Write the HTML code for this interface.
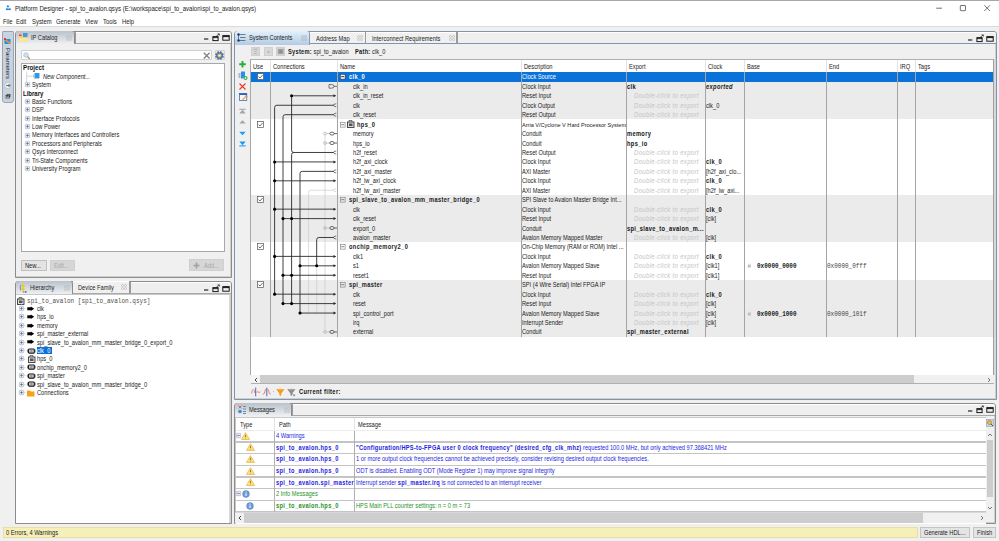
<!DOCTYPE html><html><head><meta charset="utf-8"><style>
*{margin:0;padding:0;box-sizing:border-box}
html,body{width:999px;height:541px;overflow:hidden;background:#f0f0f0;font-family:"Liberation Sans",sans-serif;color:#1a1a1a}
div{position:absolute}
.t{white-space:nowrap;font-size:6.27px;line-height:10px;height:10px;transform:scaleX(0.909);transform-origin:0 50%}
.b{font-weight:bold}
b{letter-spacing:0.39px}
.m{font-family:"Liberation Mono",monospace}
svg{position:absolute;overflow:visible}
</style></head><body>
<div class="" style="left:0px;top:0px;width:999px;height:14px;background:#fff;border-top:1px solid #a8a8a8"></div>
<svg style="left:5px;top:4px" width="8" height="8"><circle cx="2.9" cy="2.3" r="1.1" fill="#1f7ee0"/><circle cx="1.9" cy="5.3" r="1.05" fill="#1f7ee0"/><circle cx="4.8" cy="5.3" r="1.05" fill="#1f7ee0"/><path d="M1.9 5.3H4.8" stroke="#1f7ee0" stroke-width="1.2"/><path d="M2.9 3.2V4.6" stroke="#9cc4f0" stroke-width="0.6"/></svg>
<div class="t" style="left:15px;top:3.6px;font-size:7.3px;transform:scaleX(0.835);color:#1a1a1a">Platform Designer - spi_to_avalon.qsys (E:\workspace\spi_to_avalon\spi_to_avalon.qsys)</div>
<svg style="left:935px;top:3px" width="60" height="10"><path d="M1.2 5.2H7" stroke="#444" stroke-width="0.75"/><rect x="25.3" y="2.5" width="5.2" height="5.2" rx="0.5" fill="none" stroke="#444" stroke-width="0.75"/><path d="M49.3 2.3L55 8M55 2.3L49.3 8" stroke="#444" stroke-width="0.75"/></svg>
<div class="" style="left:0px;top:14px;width:999px;height:13px;background:#fff;border-bottom:1px solid #dadada"></div>
<div class="t" style="left:2.5px;top:17.0px;font-size:6.49px;color:#222">File</div>
<div class="t" style="left:16px;top:17.0px;font-size:6.49px;color:#222">Edit</div>
<div class="t" style="left:31.5px;top:17.0px;font-size:6.49px;color:#222">System</div>
<div class="t" style="left:56px;top:17.0px;font-size:6.49px;color:#222">Generate</div>
<div class="t" style="left:85px;top:17.0px;font-size:6.49px;color:#222">View</div>
<div class="t" style="left:103px;top:17.0px;font-size:6.49px;color:#222">Tools</div>
<div class="t" style="left:122px;top:17.0px;font-size:6.49px;color:#222">Help</div>
<div class="" style="left:1.5px;top:30.8px;width:12.5px;height:72.7px;background:#c9d3df;border:1px solid #98a5b6;border-radius:1px 1px 3px 3px"></div>
<svg style="left:4px;top:38px" width="8" height="7"><rect x="0.5" y="1" width="6" height="5" fill="#2b8fe0"/><path d="M0.5 1L6.5 6" stroke="#f0a020" stroke-width="1.3"/><rect x="0" y="0" width="2" height="2" fill="#e03a2a"/></svg>
<div style="left:2.5px;top:48px;width:10px;height:30px;font-size:6px;line-height:10px;writing-mode:vertical-rl;color:#222;white-space:nowrap">Parameters</div>
<svg style="left:4px;top:81.5px" width="8" height="7"><ellipse cx="3.8" cy="3.5" rx="3.3" ry="3" fill="#eef1f5" stroke="#9aa4b2" stroke-width="0.5"/><path d="M2 3.5H6M4.5 2L6 3.5L4.5 5" stroke="#333" stroke-width="0.7" fill="none"/></svg>
<svg style="left:4px;top:92.5px" width="8" height="7"><ellipse cx="3.8" cy="3.5" rx="3.3" ry="3" fill="#eef1f5" stroke="#9aa4b2" stroke-width="0.5"/><rect x="2" y="2.5" width="3.5" height="2.5" fill="none" stroke="#222" stroke-width="0.7"/><rect x="3" y="1.6" width="3" height="2.2" fill="none" stroke="#222" stroke-width="0.6"/></svg>
<div class="" style="left:14.5px;top:30.5px;width:217px;height:247px;border:1px solid #8c8c8c;border-radius:3px 3px 0 0;background:#f0f0f0;box-shadow:inset -1px -1px 0 #cfcfcf"></div>
<div class="" style="left:15.5px;top:31px;width:59px;height:13px;background:linear-gradient(#b9c1cb,#eef0f2);border-right:1px solid #8a8a8a;border-radius:3px 3px 0 0"></div>
<svg style="left:19px;top:33px" width="9" height="9"><rect x="4" y="0" width="4.5" height="4" fill="#3b9be8"/><rect x="0" y="1.5" width="2.5" height="3" fill="#e8402a"/><path d="M0 3H3.5L4.5 4H8.5V8.5H0Z" fill="#f8d060"/><path d="M0 5H8.5V8.5H0Z" fill="#fbe6a0"/></svg>
<div class="t" style="left:30.5px;top:33.2px;color:#222">IP Catalog</div>
<svg style="left:66px;top:34.8px" width="6" height="6"><g fill="none" stroke="#b8b8b8" stroke-width="0.7"><circle cx="1.5" cy="1.5" r="1"/><circle cx="4.5" cy="1.5" r="1"/><circle cx="1.5" cy="4.5" r="1"/><circle cx="4.5" cy="4.5" r="1"/></g></svg>
<div class="" style="left:74.5px;top:31.5px;width:156px;height:12px;background:#efefef;border-left:1px solid #9a9a9a;border-bottom:1px solid #a8a8a8;box-shadow:inset 0 1px 0 #fff;border-radius:0 3px 0 0"></div>
<svg style="left:203.5px;top:33px" width="28" height="9"><path d="M0 6H4.3" stroke="#111" stroke-width="1.1"/><rect x="8.9" y="3.6" width="5.2" height="4" fill="none" stroke="#111" stroke-width="0.95"/><path d="M8.9 4.6H14" stroke="#111" stroke-width="0.9"/><path d="M12.3 3.2L15.2 1.1M13.6 0.9H15.4V2.5" stroke="#111" stroke-width="0.65" fill="none"/><rect x="18.8" y="2.6" width="6.4" height="4.6" fill="none" stroke="#111" stroke-width="0.95"/><path d="M18.8 3.6H25.2" stroke="#111" stroke-width="1"/></svg>
<div class="" style="left:21px;top:50.3px;width:190.5px;height:10px;background:#fff;border:1px solid #cfcfcf;border-radius:1px"></div>
<svg style="left:22.5px;top:51.5px" width="8" height="8"><circle cx="3" cy="3" r="2.3" fill="#cfe3f7" stroke="#8fb4d8" stroke-width="0.6"/><path d="M4.6 4.6L6.8 6.8" stroke="#b07a3a" stroke-width="1.1"/></svg>
<svg style="left:203px;top:52px" width="8" height="8"><path d="M0.8 0.8L6.6 6.6M6.6 0.8L0.8 6.6" stroke="#858585" stroke-width="1.4"/></svg>
<div class="" style="left:214.5px;top:50.2px;width:10.3px;height:10.3px;background:#e6e8ea;border:1px solid #cfd2d6;border-radius:1px"></div>
<svg style="left:215px;top:50.5px" width="9" height="9"><path d="M7.79 4.81L8.82 5.34L8.15 6.96L7.04 6.61L6.61 7.04L6.96 8.15L5.34 8.82L4.81 7.79L4.19 7.79L3.66 8.82L2.04 8.15L2.39 7.04L1.96 6.61L0.85 6.96L0.18 5.34L1.21 4.81L1.21 4.19L0.18 3.66L0.85 2.04L1.96 2.39L2.39 1.96L2.04 0.85L3.66 0.18L4.19 1.21L4.81 1.21L5.34 0.18L6.96 0.85L6.61 1.96L7.04 2.39L8.15 2.04L8.82 3.66L7.79 4.19Z" fill="#4b72a8"/><circle cx="4.5" cy="4.5" r="2.1" fill="#f2b040"/><circle cx="4.5" cy="4.5" r="1.1" fill="#dff0ff"/></svg>
<div class="" style="left:21px;top:62.8px;width:204px;height:189px;background:#fff;border:1px solid #a8a8a8"></div>
<div class="t" style="left:22.6px;top:63.0px;font-weight:bold;font-size:6.82px;letter-spacing:0;color:#111">Project</div>
<svg style="left:24px;top:70px" width="20" height="14"><path d="M2.7 1.5V12M2.7 6.2H9" stroke="#c4c4c4" stroke-width="0.7" fill="none"/><rect x="10.5" y="3" width="5" height="5" rx="0.6" fill="#2f9be8"/><path d="M10 8.5H15" stroke="#aaa" stroke-width="0.7"/><path d="M9.5 4.5V7.5" stroke="#999" stroke-width="0.6"/></svg>
<div class="t" style="left:43px;top:71.5px;font-style:italic;color:#222">New Component...</div>
<svg style="left:24.5px;top:82.2px" width="5" height="5"><rect x="0.3" y="0.3" width="4.4" height="4.4" rx="0.6" fill="#e8ecf1" stroke="#a4afbe" stroke-width="0.6"/><path d="M1.2 2.5H3.8" stroke="#3c5080" stroke-width="0.6"/><path d="M2.5 1.2V3.8" stroke="#3c5080" stroke-width="0.6"/></svg>
<div class="t" style="left:32px;top:80.0px;">System</div>
<div class="t" style="left:22.6px;top:88.5px;font-weight:bold;font-size:6.60px;letter-spacing:0;color:#111">Library</div>
<svg style="left:24.5px;top:99.10000000000001px" width="5" height="5"><rect x="0.3" y="0.3" width="4.4" height="4.4" rx="0.6" fill="#e8ecf1" stroke="#a4afbe" stroke-width="0.6"/><path d="M1.2 2.5H3.8" stroke="#3c5080" stroke-width="0.6"/><path d="M2.5 1.2V3.8" stroke="#3c5080" stroke-width="0.6"/></svg>
<div class="t" style="left:32px;top:96.9px;">Basic Functions</div>
<svg style="left:24.5px;top:107.48px" width="5" height="5"><rect x="0.3" y="0.3" width="4.4" height="4.4" rx="0.6" fill="#e8ecf1" stroke="#a4afbe" stroke-width="0.6"/><path d="M1.2 2.5H3.8" stroke="#3c5080" stroke-width="0.6"/><path d="M2.5 1.2V3.8" stroke="#3c5080" stroke-width="0.6"/></svg>
<div class="t" style="left:32px;top:105.28px;">DSP</div>
<svg style="left:24.5px;top:115.86000000000001px" width="5" height="5"><rect x="0.3" y="0.3" width="4.4" height="4.4" rx="0.6" fill="#e8ecf1" stroke="#a4afbe" stroke-width="0.6"/><path d="M1.2 2.5H3.8" stroke="#3c5080" stroke-width="0.6"/><path d="M2.5 1.2V3.8" stroke="#3c5080" stroke-width="0.6"/></svg>
<div class="t" style="left:32px;top:113.66000000000001px;">Interface Protocols</div>
<svg style="left:24.5px;top:124.24000000000001px" width="5" height="5"><rect x="0.3" y="0.3" width="4.4" height="4.4" rx="0.6" fill="#e8ecf1" stroke="#a4afbe" stroke-width="0.6"/><path d="M1.2 2.5H3.8" stroke="#3c5080" stroke-width="0.6"/><path d="M2.5 1.2V3.8" stroke="#3c5080" stroke-width="0.6"/></svg>
<div class="t" style="left:32px;top:122.04px;">Low Power</div>
<svg style="left:24.5px;top:132.62px" width="5" height="5"><rect x="0.3" y="0.3" width="4.4" height="4.4" rx="0.6" fill="#e8ecf1" stroke="#a4afbe" stroke-width="0.6"/><path d="M1.2 2.5H3.8" stroke="#3c5080" stroke-width="0.6"/><path d="M2.5 1.2V3.8" stroke="#3c5080" stroke-width="0.6"/></svg>
<div class="t" style="left:32px;top:130.42000000000002px;">Memory Interfaces and Controllers</div>
<svg style="left:24.5px;top:141.0px" width="5" height="5"><rect x="0.3" y="0.3" width="4.4" height="4.4" rx="0.6" fill="#e8ecf1" stroke="#a4afbe" stroke-width="0.6"/><path d="M1.2 2.5H3.8" stroke="#3c5080" stroke-width="0.6"/><path d="M2.5 1.2V3.8" stroke="#3c5080" stroke-width="0.6"/></svg>
<div class="t" style="left:32px;top:138.8px;">Processors and Peripherals</div>
<svg style="left:24.5px;top:149.38px" width="5" height="5"><rect x="0.3" y="0.3" width="4.4" height="4.4" rx="0.6" fill="#e8ecf1" stroke="#a4afbe" stroke-width="0.6"/><path d="M1.2 2.5H3.8" stroke="#3c5080" stroke-width="0.6"/><path d="M2.5 1.2V3.8" stroke="#3c5080" stroke-width="0.6"/></svg>
<div class="t" style="left:32px;top:147.18px;">Qsys Interconnect</div>
<svg style="left:24.5px;top:157.76px" width="5" height="5"><rect x="0.3" y="0.3" width="4.4" height="4.4" rx="0.6" fill="#e8ecf1" stroke="#a4afbe" stroke-width="0.6"/><path d="M1.2 2.5H3.8" stroke="#3c5080" stroke-width="0.6"/><path d="M2.5 1.2V3.8" stroke="#3c5080" stroke-width="0.6"/></svg>
<div class="t" style="left:32px;top:155.56px;">Tri-State Components</div>
<svg style="left:24.5px;top:166.14px" width="5" height="5"><rect x="0.3" y="0.3" width="4.4" height="4.4" rx="0.6" fill="#e8ecf1" stroke="#a4afbe" stroke-width="0.6"/><path d="M1.2 2.5H3.8" stroke="#3c5080" stroke-width="0.6"/><path d="M2.5 1.2V3.8" stroke="#3c5080" stroke-width="0.6"/></svg>
<div class="t" style="left:32px;top:163.94px;">University Program</div>
<div class="" style="left:21.3px;top:259.7px;width:25.7px;height:11px;background:#e3e3e3;border:1px solid #c0c0c0"></div>
<div class="t" style="left:24.5px;top:260.8px;color:#222">New...</div>
<div class="" style="left:50.3px;top:259.7px;width:24.5px;height:11px;background:#d6d6d6;border:1px solid #d0d0d0"></div>
<div class="t" style="left:53.5px;top:260.8px;color:#a8a8a8">Edit...</div>
<div class="" style="left:189.4px;top:259.4px;width:35px;height:11.4px;background:#d6d6d6;border:1px solid #d0d0d0"></div>
<svg style="left:193px;top:261.5px" width="7" height="7"><path d="M3.5 0.5V6.5M0.5 3.5H6.5" stroke="#a0a0a0" stroke-width="1.6"/></svg>
<div class="t" style="left:203.5px;top:260.8px;color:#a8a8a8">Add...</div>
<div class="" style="left:14.5px;top:280.5px;width:217px;height:243px;border:1px solid #8c8c8c;border-radius:3px 3px 0 0;background:#f0f0f0;box-shadow:inset -1px -1px 0 #cfcfcf"></div>
<div class="" style="left:15.5px;top:281px;width:57px;height:13px;background:linear-gradient(#b9c1cb,#eef0f2);border-right:1px solid #8a8a8a;border-radius:3px 3px 0 0"></div>
<svg style="left:19px;top:282.5px" width="9" height="10"><path d="M1.7 2.2Q0.6 4.8 1.7 7.4" stroke="#4a78b8" stroke-width="0.8" fill="none"/><circle cx="4" cy="2.6" r="1.7" fill="#f4c818"/><circle cx="4" cy="6" r="1.7" fill="#f4c818"/><ellipse cx="4.5" cy="8.9" rx="0.9" ry="0.6" fill="#6080a8"/><ellipse cx="6.7" cy="8.9" rx="1" ry="0.7" fill="#203860"/></svg>
<div class="t" style="left:30.2px;top:283.2px;color:#222">Hierarchy</div>
<svg style="left:63.5px;top:284.8px" width="6" height="6"><g fill="none" stroke="#b8b8b8" stroke-width="0.7"><circle cx="1.5" cy="1.5" r="1"/><circle cx="4.5" cy="1.5" r="1"/><circle cx="1.5" cy="4.5" r="1"/><circle cx="4.5" cy="4.5" r="1"/></g></svg>
<div class="" style="left:72.5px;top:281px;width:57.5px;height:12.8px;background:#f0f0f0;box-shadow:inset 0 1px 0 #fff;border-right:1px solid #9a9a9a;border-bottom:1px solid #a8a8a8"></div>
<div class="t" style="left:78px;top:282.7px;color:#222">Device Family</div>
<svg style="left:120.5px;top:284.3px" width="6" height="6"><g fill="none" stroke="#b8b8b8" stroke-width="0.7"><circle cx="1.5" cy="1.5" r="1"/><circle cx="4.5" cy="1.5" r="1"/><circle cx="1.5" cy="4.5" r="1"/><circle cx="4.5" cy="4.5" r="1"/></g></svg>
<div class="" style="left:130px;top:281.5px;width:100.5px;height:12.3px;background:#efefef;border-left:1px solid #9a9a9a;border-bottom:1px solid #a8a8a8;box-shadow:inset 0 1px 0 #fff;border-radius:0 3px 0 0"></div>
<svg style="left:203.5px;top:283.5px" width="28" height="9"><path d="M0 6H4.3" stroke="#111" stroke-width="1.1"/><rect x="8.9" y="3.6" width="5.2" height="4" fill="none" stroke="#111" stroke-width="0.95"/><path d="M8.9 4.6H14" stroke="#111" stroke-width="0.9"/><path d="M12.3 3.2L15.2 1.1M13.6 0.9H15.4V2.5" stroke="#111" stroke-width="0.65" fill="none"/><rect x="18.8" y="2.6" width="6.4" height="4.6" fill="none" stroke="#111" stroke-width="0.95"/><path d="M18.8 3.6H25.2" stroke="#111" stroke-width="1"/></svg>
<div class="" style="left:15.5px;top:294.3px;width:214px;height:228.5px;background:#fff;border-top:1px solid #c8c8c8;border-right:1px solid #d8d8d8"></div>
<svg style="left:17px;top:297px" width="8" height="8"><rect x="0.5" y="2" width="6.5" height="5.5" fill="#ddd" stroke="#222" stroke-width="0.8"/><rect x="2" y="3.5" width="3.5" height="2.5" fill="#555"/><path d="M2 2V0.5H5V2" stroke="#222" stroke-width="0.6" fill="none"/></svg>
<div class="t" style="left:27.4px;top:296.0px;font-family:'Liberation Mono',monospace;font-size:6.66px;color:#505050">spi_to_avalon [spi_to_avalon.qsys]</div>
<svg style="left:21px;top:304px" width="2" height="90"><path d="M0.5 0V88" stroke="#c8c8c8" stroke-width="0.6" stroke-dasharray="0.8 0.8"/></svg>
<svg style="left:19px;top:306.0px" width="5" height="5"><rect x="0.3" y="0.3" width="4.4" height="4.4" rx="0.6" fill="#e8ecf1" stroke="#a4afbe" stroke-width="0.6"/><path d="M1.2 2.5H3.8" stroke="#3c5080" stroke-width="0.6"/><path d="M2.5 1.2V3.8" stroke="#3c5080" stroke-width="0.6"/></svg>
<svg style="left:24px;top:308.2px" width="4" height="1"><path d="M0 0.5H3" stroke="#c0c0c0" stroke-width="0.6" stroke-dasharray="0.8 0.8"/></svg>
<svg style="left:27px;top:305.7px" width="8" height="6"><path d="M0.3 1.3H3.8V0.6L7.2 2.8L3.8 5V4.3H0.3Z" fill="#000"/></svg>
<div class="t" style="left:37.2px;top:304.0px;color:#222">clk</div>
<svg style="left:19px;top:314.4px" width="5" height="5"><rect x="0.3" y="0.3" width="4.4" height="4.4" rx="0.6" fill="#e8ecf1" stroke="#a4afbe" stroke-width="0.6"/><path d="M1.2 2.5H3.8" stroke="#3c5080" stroke-width="0.6"/><path d="M2.5 1.2V3.8" stroke="#3c5080" stroke-width="0.6"/></svg>
<svg style="left:24px;top:316.59999999999997px" width="4" height="1"><path d="M0 0.5H3" stroke="#c0c0c0" stroke-width="0.6" stroke-dasharray="0.8 0.8"/></svg>
<svg style="left:27px;top:314.09999999999997px" width="8" height="6"><path d="M0.3 1.3H3.8V0.6L7.2 2.8L3.8 5V4.3H0.3Z" fill="#000"/></svg>
<div class="t" style="left:37.2px;top:312.4px;color:#222">hps_io</div>
<svg style="left:19px;top:322.8px" width="5" height="5"><rect x="0.3" y="0.3" width="4.4" height="4.4" rx="0.6" fill="#e8ecf1" stroke="#a4afbe" stroke-width="0.6"/><path d="M1.2 2.5H3.8" stroke="#3c5080" stroke-width="0.6"/><path d="M2.5 1.2V3.8" stroke="#3c5080" stroke-width="0.6"/></svg>
<svg style="left:24px;top:325.0px" width="4" height="1"><path d="M0 0.5H3" stroke="#c0c0c0" stroke-width="0.6" stroke-dasharray="0.8 0.8"/></svg>
<svg style="left:27px;top:322.5px" width="8" height="6"><path d="M0.3 1.3H3.8V0.6L7.2 2.8L3.8 5V4.3H0.3Z" fill="#000"/></svg>
<div class="t" style="left:37.2px;top:320.8px;color:#222">memory</div>
<svg style="left:19px;top:331.2px" width="5" height="5"><rect x="0.3" y="0.3" width="4.4" height="4.4" rx="0.6" fill="#e8ecf1" stroke="#a4afbe" stroke-width="0.6"/><path d="M1.2 2.5H3.8" stroke="#3c5080" stroke-width="0.6"/><path d="M2.5 1.2V3.8" stroke="#3c5080" stroke-width="0.6"/></svg>
<svg style="left:24px;top:333.4px" width="4" height="1"><path d="M0 0.5H3" stroke="#c0c0c0" stroke-width="0.6" stroke-dasharray="0.8 0.8"/></svg>
<svg style="left:27px;top:330.9px" width="8" height="6"><path d="M0.3 1.3H3.8V0.6L7.2 2.8L3.8 5V4.3H0.3Z" fill="#000"/></svg>
<div class="t" style="left:37.2px;top:329.2px;color:#222">spi_master_external</div>
<svg style="left:19px;top:339.6px" width="5" height="5"><rect x="0.3" y="0.3" width="4.4" height="4.4" rx="0.6" fill="#e8ecf1" stroke="#a4afbe" stroke-width="0.6"/><path d="M1.2 2.5H3.8" stroke="#3c5080" stroke-width="0.6"/><path d="M2.5 1.2V3.8" stroke="#3c5080" stroke-width="0.6"/></svg>
<svg style="left:24px;top:341.8px" width="4" height="1"><path d="M0 0.5H3" stroke="#c0c0c0" stroke-width="0.6" stroke-dasharray="0.8 0.8"/></svg>
<svg style="left:27px;top:339.3px" width="8" height="6"><path d="M0.3 1.3H3.8V0.6L7.2 2.8L3.8 5V4.3H0.3Z" fill="#000"/></svg>
<div class="t" style="left:37.2px;top:337.6px;color:#222">spi_slave_to_avalon_mm_master_bridge_0_export_0</div>
<svg style="left:19px;top:348.0px" width="5" height="5"><rect x="0.3" y="0.3" width="4.4" height="4.4" rx="0.6" fill="#e8ecf1" stroke="#a4afbe" stroke-width="0.6"/><path d="M1.2 2.5H3.8" stroke="#3c5080" stroke-width="0.6"/><path d="M2.5 1.2V3.8" stroke="#3c5080" stroke-width="0.6"/></svg>
<svg style="left:24px;top:350.2px" width="4" height="1"><path d="M0 0.5H3" stroke="#c0c0c0" stroke-width="0.6" stroke-dasharray="0.8 0.8"/></svg>
<svg style="left:27px;top:347.5px" width="9" height="6"><rect x="1.6" y="0.9" width="5.6" height="4.2" rx="0.7" fill="#e4e4e4" stroke="#111" stroke-width="1.05"/><path d="M0.2 2.2H1.6M0.2 3.8H1.6M7.2 2.2H8.6M7.2 3.8H8.6" stroke="#111" stroke-width="0.9"/><rect x="3.2" y="2.3" width="2.4" height="1.4" fill="#777"/></svg>
<div class="" style="left:36.9px;top:346.9px;width:14.8px;height:7.6px;background:#0a6fd8"></div>
<div class="t" style="left:37.4px;top:346.0px;color:#fff">clk_0</div>
<svg style="left:19px;top:356.4px" width="5" height="5"><rect x="0.3" y="0.3" width="4.4" height="4.4" rx="0.6" fill="#e8ecf1" stroke="#a4afbe" stroke-width="0.6"/><path d="M1.2 2.5H3.8" stroke="#3c5080" stroke-width="0.6"/><path d="M2.5 1.2V3.8" stroke="#3c5080" stroke-width="0.6"/></svg>
<svg style="left:24px;top:358.59999999999997px" width="4" height="1"><path d="M0 0.5H3" stroke="#c0c0c0" stroke-width="0.6" stroke-dasharray="0.8 0.8"/></svg>
<svg style="left:27.5px;top:355.4px" width="8" height="8"><rect x="0.5" y="2" width="6.5" height="5.5" fill="#ddd" stroke="#222" stroke-width="0.8"/><rect x="2" y="3.5" width="3.5" height="2.5" fill="#555"/><path d="M2 2V0.5H5V2" stroke="#222" stroke-width="0.6" fill="none"/></svg>
<div class="t" style="left:37.2px;top:354.4px;color:#222">hps_0</div>
<svg style="left:19px;top:364.8px" width="5" height="5"><rect x="0.3" y="0.3" width="4.4" height="4.4" rx="0.6" fill="#e8ecf1" stroke="#a4afbe" stroke-width="0.6"/><path d="M1.2 2.5H3.8" stroke="#3c5080" stroke-width="0.6"/><path d="M2.5 1.2V3.8" stroke="#3c5080" stroke-width="0.6"/></svg>
<svg style="left:24px;top:367.0px" width="4" height="1"><path d="M0 0.5H3" stroke="#c0c0c0" stroke-width="0.6" stroke-dasharray="0.8 0.8"/></svg>
<svg style="left:27px;top:364.3px" width="9" height="6"><rect x="1.6" y="0.9" width="5.6" height="4.2" rx="0.7" fill="#e4e4e4" stroke="#111" stroke-width="1.05"/><path d="M0.2 2.2H1.6M0.2 3.8H1.6M7.2 2.2H8.6M7.2 3.8H8.6" stroke="#111" stroke-width="0.9"/><rect x="3.2" y="2.3" width="2.4" height="1.4" fill="#777"/></svg>
<div class="t" style="left:37.2px;top:362.8px;color:#222">onchip_memory2_0</div>
<svg style="left:19px;top:373.2px" width="5" height="5"><rect x="0.3" y="0.3" width="4.4" height="4.4" rx="0.6" fill="#e8ecf1" stroke="#a4afbe" stroke-width="0.6"/><path d="M1.2 2.5H3.8" stroke="#3c5080" stroke-width="0.6"/><path d="M2.5 1.2V3.8" stroke="#3c5080" stroke-width="0.6"/></svg>
<svg style="left:24px;top:375.4px" width="4" height="1"><path d="M0 0.5H3" stroke="#c0c0c0" stroke-width="0.6" stroke-dasharray="0.8 0.8"/></svg>
<svg style="left:27px;top:372.7px" width="9" height="6"><rect x="1.6" y="0.9" width="5.6" height="4.2" rx="0.7" fill="#e4e4e4" stroke="#111" stroke-width="1.05"/><path d="M0.2 2.2H1.6M0.2 3.8H1.6M7.2 2.2H8.6M7.2 3.8H8.6" stroke="#111" stroke-width="0.9"/><rect x="3.2" y="2.3" width="2.4" height="1.4" fill="#777"/></svg>
<div class="t" style="left:37.2px;top:371.2px;color:#222">spi_master</div>
<svg style="left:19px;top:381.6px" width="5" height="5"><rect x="0.3" y="0.3" width="4.4" height="4.4" rx="0.6" fill="#e8ecf1" stroke="#a4afbe" stroke-width="0.6"/><path d="M1.2 2.5H3.8" stroke="#3c5080" stroke-width="0.6"/><path d="M2.5 1.2V3.8" stroke="#3c5080" stroke-width="0.6"/></svg>
<svg style="left:24px;top:383.8px" width="4" height="1"><path d="M0 0.5H3" stroke="#c0c0c0" stroke-width="0.6" stroke-dasharray="0.8 0.8"/></svg>
<svg style="left:27px;top:381.1px" width="9" height="6"><rect x="1.6" y="0.9" width="5.6" height="4.2" rx="0.7" fill="#e4e4e4" stroke="#111" stroke-width="1.05"/><path d="M0.2 2.2H1.6M0.2 3.8H1.6M7.2 2.2H8.6M7.2 3.8H8.6" stroke="#111" stroke-width="0.9"/><rect x="3.2" y="2.3" width="2.4" height="1.4" fill="#777"/></svg>
<div class="t" style="left:37.2px;top:379.6px;color:#222">spi_slave_to_avalon_mm_master_bridge_0</div>
<svg style="left:19px;top:390.0px" width="5" height="5"><rect x="0.3" y="0.3" width="4.4" height="4.4" rx="0.6" fill="#e8ecf1" stroke="#a4afbe" stroke-width="0.6"/><path d="M1.2 2.5H3.8" stroke="#3c5080" stroke-width="0.6"/><path d="M2.5 1.2V3.8" stroke="#3c5080" stroke-width="0.6"/></svg>
<svg style="left:24px;top:392.2px" width="4" height="1"><path d="M0 0.5H3" stroke="#c0c0c0" stroke-width="0.6" stroke-dasharray="0.8 0.8"/></svg>
<svg style="left:27px;top:389.5px" width="8" height="7"><path d="M0 0.5H3L4 1.5H7.5V6.5H0Z" fill="#f7a21b"/></svg>
<div class="t" style="left:37.2px;top:388.0px;color:#222">Connections</div>
<div class="" style="left:233.5px;top:30.5px;width:763.5px;height:369px;border:1px solid #8094ad;border-radius:3px 3px 0 0;background:#f0f0f0;box-shadow:inset -1px -1px 0 #cfcfcf"></div>
<div class="" style="left:234.5px;top:31px;width:75.5px;height:14px;background:linear-gradient(#e2f1fb,#b3cbe2);border-right:1px solid #8a9ab0;border-radius:3px 3px 0 0"></div>
<svg style="left:237px;top:33px" width="10" height="9"><path d="M1.5 1.5V7.5M1.5 1.5H8.5M1.5 7.5H8.5M3 4.5H8.5" stroke="#1e3a5c" stroke-width="0.6" fill="none"/><circle cx="1.5" cy="1.5" r="1.2" fill="#1e3a5c"/><circle cx="1.5" cy="7.5" r="1.2" fill="#1e3a5c"/></svg>
<div class="t" style="left:249px;top:33.1px;color:#1a1a1a">System Contents</div>
<svg style="left:300.5px;top:34.5px" width="6" height="6"><g fill="none" stroke="#a8b0b8" stroke-width="0.7"><circle cx="1.5" cy="1.5" r="1"/><circle cx="4.5" cy="1.5" r="1"/><circle cx="1.5" cy="4.5" r="1"/><circle cx="4.5" cy="4.5" r="1"/></g></svg>
<div class="" style="left:310px;top:31.5px;width:56px;height:12.7px;background:#f0f0f0;box-shadow:inset 0 1px 0 #fff;border-right:1px solid #9a9a9a;border-bottom:1px solid #8094ad"></div>
<div class="t" style="left:315.5px;top:33.5px;color:#222">Address Map</div>
<svg style="left:356.5px;top:35.0px" width="6" height="6"><g fill="none" stroke="#b8b8b8" stroke-width="0.7"><circle cx="1.5" cy="1.5" r="1"/><circle cx="4.5" cy="1.5" r="1"/><circle cx="1.5" cy="4.5" r="1"/><circle cx="4.5" cy="4.5" r="1"/></g></svg>
<div class="" style="left:366px;top:31.5px;width:91px;height:12.7px;background:#f0f0f0;box-shadow:inset 0 1px 0 #fff;border-right:1px solid #9a9a9a;border-bottom:1px solid #8094ad"></div>
<div class="t" style="left:371.5px;top:33.5px;color:#222">Interconnect Requirements</div>
<svg style="left:448.5px;top:35.0px" width="6" height="6"><g fill="none" stroke="#b8b8b8" stroke-width="0.7"><circle cx="1.5" cy="1.5" r="1"/><circle cx="4.5" cy="1.5" r="1"/><circle cx="1.5" cy="4.5" r="1"/><circle cx="4.5" cy="4.5" r="1"/></g></svg>
<div class="" style="left:457px;top:31.5px;width:539px;height:12.7px;background:#efefef;border-left:1px solid #9a9a9a;border-bottom:1px solid #8094ad;box-shadow:inset 0 1px 0 #fff;border-radius:0 3px 0 0"></div>
<svg style="left:968px;top:33.5px" width="28" height="9"><path d="M0 6H4.3" stroke="#111" stroke-width="1.1"/><rect x="8.9" y="3.6" width="5.2" height="4" fill="none" stroke="#111" stroke-width="0.95"/><path d="M8.9 4.6H14" stroke="#111" stroke-width="0.9"/><path d="M12.3 3.2L15.2 1.1M13.6 0.9H15.4V2.5" stroke="#111" stroke-width="0.65" fill="none"/><rect x="18.8" y="2.6" width="6.4" height="4.6" fill="none" stroke="#111" stroke-width="0.95"/><path d="M18.8 3.6H25.2" stroke="#111" stroke-width="1"/></svg>
<div class="" style="left:251px;top:47px;width:9px;height:8.8px;background:#d8d8d8;border:1px solid #cfcfcf"></div>
<div class="" style="left:263.5px;top:47px;width:9px;height:8.8px;background:#d8d8d8;border:1px solid #cfcfcf"></div>
<svg style="left:252px;top:48px" width="8" height="7"><path d="M1.5 1.2H5.5M2 5.5H5M2.2 2.5L3.5 4L4.8 2.5" stroke="#a0a0a0" stroke-width="0.6" fill="none"/></svg>
<svg style="left:264.5px;top:48px" width="8" height="7"><path d="M1.8 4.5L3.5 2.8L5.2 4.5Z" fill="#a8a8a8"/></svg>
<div class="" style="left:276px;top:47px;width:9px;height:8.8px;background:#d0d0d0;border:1px solid #cfcfcf"></div>
<svg style="left:277px;top:48px" width="8" height="7"><rect x="1" y="1" width="5.5" height="5" fill="#a0a0a0"/><rect x="2.5" y="2.5" width="2.5" height="2" fill="#888"/></svg>
<div class="t" style="left:288px;top:46.9px;color:#1a1a1a"><b style="letter-spacing:0.28px">System:</b> spi_to_avalon&nbsp;&nbsp;&nbsp;&nbsp;<b style="letter-spacing:0.28px">Path:</b> clk_0</div>
<svg style="left:238px;top:60px" width="9" height="9"><path d="M4.5 1V7.6M1.2 4.3H7.8" stroke="#22b036" stroke-width="1.9"/></svg>
<svg style="left:238px;top:70.5px" width="10" height="9"><rect x="0.5" y="2" width="2" height="5" fill="#a8b8c8"/><path d="M3 0.5H7V5.5L5 7.5H3Z" fill="#2f8fe0"/><circle cx="7.5" cy="7" r="2" fill="#28b040"/><path d="M7.5 5.8V8.2M6.3 7H8.7" stroke="#fff" stroke-width="0.6"/></svg>
<svg style="left:238px;top:81.5px" width="9" height="9"><path d="M1.5 1.5L7.5 7.5M7.5 1.5L1.5 7.5" stroke="#e23a2e" stroke-width="1.1"/></svg>
<svg style="left:238.5px;top:93px" width="9" height="9"><rect x="0.4" y="0.4" width="7.4" height="7" fill="#f4f8fc" stroke="#2a5fb0" stroke-width="0.7"/><rect x="0.4" y="0.4" width="7.4" height="1.6" fill="#2a5fb0"/><path d="M3.5 6.8L7.5 2.8" stroke="#f0a020" stroke-width="1.2"/><path d="M7 2.4L8 3.4" stroke="#e03030" stroke-width="0.9"/></svg>
<svg style="left:238px;top:106.5px" width="9" height="9"><path d="M1.3 2.3H7.7" stroke="#9ea5ac" stroke-width="1.1"/><path d="M1.3 6.6L4.5 2.8L7.7 6.6Z" fill="#9ea5ac"/></svg>
<svg style="left:238px;top:118px" width="9" height="8"><path d="M1.3 5.6L4.5 2.2L7.7 5.6Z" fill="#9ea5ac"/></svg>
<svg style="left:238px;top:128.5px" width="9" height="8"><path d="M1.3 2.7L4.5 6.2L7.7 2.7Z" fill="#1c9cf2"/></svg>
<svg style="left:238px;top:139px" width="9" height="9"><path d="M1.3 2.4L4.5 6.2L7.7 2.4Z" fill="#1c9cf2"/><path d="M1.3 6.9H7.7" stroke="#1c9cf2" stroke-width="1.1"/></svg>
<div class="" style="left:250px;top:58.6px;width:743.6px;height:316.79999999999995px;background:#fff;border-left:1px solid #a8a8a8;border-top:1px solid #b0b0b0"></div>
<div class="" style="left:251px;top:72.2px;width:742.6px;height:47.225px;background:#ebebeb"></div>
<div class="" style="left:251px;top:194.985px;width:742.6px;height:47.225px;background:#ebebeb"></div>
<div class="" style="left:251px;top:279.99px;width:742.6px;height:56.67px;background:#ebebeb"></div>
<div class="" style="left:251px;top:72.2px;width:742.6px;height:9.445px;background:#0a72d9"></div>
<div class="t" style="left:252.8px;top:61.5px;color:#1a1a1a">Use</div>
<div class="t" style="left:273px;top:61.5px;color:#1a1a1a">Connections</div>
<div class="t" style="left:339.8px;top:61.5px;color:#1a1a1a">Name</div>
<div class="t" style="left:524px;top:61.5px;color:#1a1a1a">Description</div>
<div class="t" style="left:628.5px;top:61.5px;color:#1a1a1a">Export</div>
<div class="t" style="left:707.5px;top:61.5px;color:#1a1a1a">Clock</div>
<div class="t" style="left:747px;top:61.5px;color:#1a1a1a">Base</div>
<div class="t" style="left:828.8px;top:61.5px;color:#1a1a1a">End</div>
<div class="t" style="left:899.5px;top:61.5px;color:#1a1a1a">IRQ</div>
<div class="t" style="left:917.5px;top:61.5px;color:#1a1a1a">Tags</div>
<div class="" style="left:269.8px;top:59.6px;width:1px;height:12.600000000000001px;background:#e2e2e2"></div>
<div class="" style="left:269.8px;top:72.2px;width:1px;height:264.46000000000004px;background:#a4a4a4"></div>
<div class="" style="left:336.9px;top:59.6px;width:1px;height:12.600000000000001px;background:#e2e2e2"></div>
<div class="" style="left:336.9px;top:72.2px;width:1px;height:264.46000000000004px;background:#a4a4a4"></div>
<div class="" style="left:521.0px;top:59.6px;width:1px;height:12.600000000000001px;background:#e2e2e2"></div>
<div class="" style="left:521.0px;top:72.2px;width:1px;height:264.46000000000004px;background:#a4a4a4"></div>
<div class="" style="left:625.7px;top:59.6px;width:1px;height:12.600000000000001px;background:#e2e2e2"></div>
<div class="" style="left:625.7px;top:72.2px;width:1px;height:264.46000000000004px;background:#a4a4a4"></div>
<div class="" style="left:705.0px;top:59.6px;width:1px;height:12.600000000000001px;background:#e2e2e2"></div>
<div class="" style="left:705.0px;top:72.2px;width:1px;height:264.46000000000004px;background:#a4a4a4"></div>
<div class="" style="left:744.2px;top:59.6px;width:1px;height:12.600000000000001px;background:#e2e2e2"></div>
<div class="" style="left:744.2px;top:72.2px;width:1px;height:264.46000000000004px;background:#a4a4a4"></div>
<div class="" style="left:825.7px;top:59.6px;width:1px;height:12.600000000000001px;background:#e2e2e2"></div>
<div class="" style="left:825.7px;top:72.2px;width:1px;height:264.46000000000004px;background:#a4a4a4"></div>
<div class="" style="left:896.5px;top:59.6px;width:1px;height:12.600000000000001px;background:#e2e2e2"></div>
<div class="" style="left:896.5px;top:72.2px;width:1px;height:264.46000000000004px;background:#a4a4a4"></div>
<div class="" style="left:914.5px;top:59.6px;width:1px;height:12.600000000000001px;background:#e2e2e2"></div>
<div class="" style="left:914.5px;top:72.2px;width:1px;height:264.46000000000004px;background:#a4a4a4"></div>
<div class="" style="left:993.1px;top:58.6px;width:1.2px;height:316.79999999999995px;background:#a0a0a0"></div>
<div class="" style="left:994.3000000000001px;top:58.6px;width:1.5px;height:316.79999999999995px;background:#d8d8d8"></div>
<svg style="left:256.5px;top:73.4225px" width="7" height="7"><rect x="0.5" y="0.5" width="6" height="6" fill="#fff" stroke="#555" stroke-width="0.7"/><path d="M1.6 3.6L3 5L5.6 2" stroke="#333" stroke-width="0.7" fill="none"/></svg>
<svg style="left:339.8px;top:74.3225px" width="6" height="6"><rect x="0.3" y="0.3" width="4.8" height="4.8" fill="#fff" stroke="#333" stroke-width="0.6"/><path d="M1.2 2.7H4.2" stroke="#111" stroke-width="0.9"/></svg>
<div class="t" style="left:348.9px;top:72.4225px;font-weight:bold;color:#fff;letter-spacing:0.39px">clk_0</div>
<div class="t" style="left:522.3px;top:72.4225px;color:#fff">Clock Source</div>
<div class="t" style="left:352.7px;top:81.8675px;color:#1a1a1a">clk_in</div>
<div class="t" style="left:522.3px;top:81.8675px;color:#1a1a1a">Clock Input</div>
<div class="t" style="left:627.2px;top:81.8675px;font-weight:bold;color:#111;letter-spacing:0.39px">clk</div>
<div class="t" style="left:706.3px;top:81.8675px;color:#1a1a1a;font-weight:bold;font-style:italic;letter-spacing:0.39px">exported</div>
<div class="t" style="left:352.7px;top:91.3125px;color:#1a1a1a">clk_in_reset</div>
<div class="t" style="left:522.3px;top:91.3125px;color:#1a1a1a">Reset Input</div>
<div class="t" style="left:633.5px;top:91.3125px;font-style:italic;font-size:6.60px;letter-spacing:0.36px;color:#c4c4c4">Double-click to export</div>
<div class="t" style="left:352.7px;top:100.75750000000001px;color:#1a1a1a">clk</div>
<div class="t" style="left:522.3px;top:100.75750000000001px;color:#1a1a1a">Clock Output</div>
<div class="t" style="left:633.5px;top:100.75750000000001px;font-style:italic;font-size:6.60px;letter-spacing:0.36px;color:#c4c4c4">Double-click to export</div>
<div class="t" style="left:706.3px;top:100.75750000000001px;color:#1a1a1a">clk_0</div>
<div class="t" style="left:352.7px;top:110.2025px;color:#1a1a1a">clk_reset</div>
<div class="t" style="left:522.3px;top:110.2025px;color:#1a1a1a">Reset Output</div>
<div class="t" style="left:633.5px;top:110.2025px;font-style:italic;font-size:6.60px;letter-spacing:0.36px;color:#c4c4c4">Double-click to export</div>
<svg style="left:256.5px;top:120.64750000000001px" width="7" height="7"><rect x="0.5" y="0.5" width="6" height="6" fill="#fff" stroke="#555" stroke-width="0.7"/><path d="M1.6 3.6L3 5L5.6 2" stroke="#333" stroke-width="0.7" fill="none"/></svg>
<svg style="left:339.8px;top:121.54750000000001px" width="6" height="6"><rect x="0.3" y="0.3" width="4.8" height="4.8" fill="none" stroke="#777" stroke-width="0.6"/><path d="M1.2 2.7H4.2" stroke="#333" stroke-width="0.6"/></svg>
<svg style="left:346.5px;top:120.34750000000001px" width="8" height="8"><rect x="0.5" y="2" width="6.5" height="5.5" fill="#ddd" stroke="#222" stroke-width="0.8"/><rect x="2" y="3.5" width="3.5" height="2.5" fill="#555"/><path d="M2 2V0.5H5V2" stroke="#222" stroke-width="0.6" fill="none"/></svg>
<div class="t" style="left:357px;top:119.64750000000001px;font-weight:bold;color:#1a1a1a;letter-spacing:0.39px">hps_0</div>
<div class="t" style="left:522.3px;top:119.64750000000001px;color:#1a1a1a;font-size:6.11px">Arria V/Cyclone V Hard Processor System</div>
<div class="t" style="left:352.7px;top:129.0925px;color:#1a1a1a">memory</div>
<div class="t" style="left:522.3px;top:129.0925px;color:#1a1a1a">Conduit</div>
<div class="t" style="left:627.2px;top:129.0925px;font-weight:bold;color:#111;letter-spacing:0.39px">memory</div>
<div class="t" style="left:352.7px;top:138.53750000000002px;color:#1a1a1a">hps_io</div>
<div class="t" style="left:522.3px;top:138.53750000000002px;color:#1a1a1a">Conduit</div>
<div class="t" style="left:627.2px;top:138.53750000000002px;font-weight:bold;color:#111;letter-spacing:0.39px">hps_io</div>
<div class="t" style="left:352.7px;top:147.98250000000002px;color:#1a1a1a">h2f_reset</div>
<div class="t" style="left:522.3px;top:147.98250000000002px;color:#1a1a1a">Reset Output</div>
<div class="t" style="left:633.5px;top:147.98250000000002px;font-style:italic;font-size:6.60px;letter-spacing:0.36px;color:#c4c4c4">Double-click to export</div>
<div class="t" style="left:352.7px;top:157.4275px;color:#1a1a1a">h2f_axi_clock</div>
<div class="t" style="left:522.3px;top:157.4275px;color:#1a1a1a">Clock Input</div>
<div class="t" style="left:633.5px;top:157.4275px;font-style:italic;font-size:6.60px;letter-spacing:0.36px;color:#c4c4c4">Double-click to export</div>
<div class="t" style="left:706.3px;top:157.4275px;color:#1a1a1a;font-weight:bold;letter-spacing:0.39px">clk_0</div>
<div class="t" style="left:352.7px;top:166.8725px;color:#1a1a1a">h2f_axi_master</div>
<div class="t" style="left:522.3px;top:166.8725px;color:#1a1a1a">AXI Master</div>
<div class="t" style="left:633.5px;top:166.8725px;font-style:italic;font-size:6.60px;letter-spacing:0.36px;color:#c4c4c4">Double-click to export</div>
<div class="t" style="left:706.3px;top:166.8725px;color:#1a1a1a">[h2f_axi_clo...</div>
<div class="t" style="left:352.7px;top:176.3175px;color:#1a1a1a">h2f_lw_axi_clock</div>
<div class="t" style="left:522.3px;top:176.3175px;color:#1a1a1a">Clock Input</div>
<div class="t" style="left:633.5px;top:176.3175px;font-style:italic;font-size:6.60px;letter-spacing:0.36px;color:#c4c4c4">Double-click to export</div>
<div class="t" style="left:706.3px;top:176.3175px;color:#1a1a1a;font-weight:bold;letter-spacing:0.39px">clk_0</div>
<div class="t" style="left:352.7px;top:185.7625px;color:#1a1a1a">h2f_lw_axi_master</div>
<div class="t" style="left:522.3px;top:185.7625px;color:#1a1a1a">AXI Master</div>
<div class="t" style="left:633.5px;top:185.7625px;font-style:italic;font-size:6.60px;letter-spacing:0.36px;color:#c4c4c4">Double-click to export</div>
<div class="t" style="left:706.3px;top:185.7625px;color:#1a1a1a">[h2f_lw_axi...</div>
<svg style="left:256.5px;top:196.2075px" width="7" height="7"><rect x="0.5" y="0.5" width="6" height="6" fill="#fff" stroke="#555" stroke-width="0.7"/><path d="M1.6 3.6L3 5L5.6 2" stroke="#333" stroke-width="0.7" fill="none"/></svg>
<svg style="left:339.8px;top:197.10750000000002px" width="6" height="6"><rect x="0.3" y="0.3" width="4.8" height="4.8" fill="none" stroke="#777" stroke-width="0.6"/><path d="M1.2 2.7H4.2" stroke="#333" stroke-width="0.6"/></svg>
<div class="t" style="left:348.9px;top:195.2075px;font-weight:bold;color:#1a1a1a;letter-spacing:0.39px">spi_slave_to_avalon_mm_master_bridge_0</div>
<div class="t" style="left:522.3px;top:195.2075px;color:#1a1a1a">SPI Slave to Avalon Master Bridge Int...</div>
<div class="t" style="left:352.7px;top:204.65250000000003px;color:#1a1a1a">clk</div>
<div class="t" style="left:522.3px;top:204.65250000000003px;color:#1a1a1a">Clock Input</div>
<div class="t" style="left:633.5px;top:204.65250000000003px;font-style:italic;font-size:6.60px;letter-spacing:0.36px;color:#c4c4c4">Double-click to export</div>
<div class="t" style="left:706.3px;top:204.65250000000003px;color:#1a1a1a;font-weight:bold;letter-spacing:0.39px">clk_0</div>
<div class="t" style="left:352.7px;top:214.09750000000003px;color:#1a1a1a">clk_reset</div>
<div class="t" style="left:522.3px;top:214.09750000000003px;color:#1a1a1a">Reset Input</div>
<div class="t" style="left:633.5px;top:214.09750000000003px;font-style:italic;font-size:6.60px;letter-spacing:0.36px;color:#c4c4c4">Double-click to export</div>
<div class="t" style="left:706.3px;top:214.09750000000003px;color:#1a1a1a">[clk]</div>
<div class="t" style="left:352.7px;top:223.54250000000002px;color:#1a1a1a">export_0</div>
<div class="t" style="left:522.3px;top:223.54250000000002px;color:#1a1a1a">Conduit</div>
<div class="t" style="left:627.2px;top:223.54250000000002px;font-weight:bold;color:#111;letter-spacing:0.39px">spi_slave_to_avalon_m...</div>
<div class="t" style="left:352.7px;top:232.9875px;color:#1a1a1a">avalon_master</div>
<div class="t" style="left:522.3px;top:232.9875px;color:#1a1a1a">Avalon Memory Mapped Master</div>
<div class="t" style="left:633.5px;top:232.9875px;font-style:italic;font-size:6.60px;letter-spacing:0.36px;color:#c4c4c4">Double-click to export</div>
<div class="t" style="left:706.3px;top:232.9875px;color:#1a1a1a">[clk]</div>
<svg style="left:256.5px;top:243.4325px" width="7" height="7"><rect x="0.5" y="0.5" width="6" height="6" fill="#fff" stroke="#555" stroke-width="0.7"/><path d="M1.6 3.6L3 5L5.6 2" stroke="#333" stroke-width="0.7" fill="none"/></svg>
<svg style="left:339.8px;top:244.3325px" width="6" height="6"><rect x="0.3" y="0.3" width="4.8" height="4.8" fill="none" stroke="#777" stroke-width="0.6"/><path d="M1.2 2.7H4.2" stroke="#333" stroke-width="0.6"/></svg>
<div class="t" style="left:348.9px;top:242.4325px;font-weight:bold;color:#1a1a1a;letter-spacing:0.39px">onchip_memory2_0</div>
<div class="t" style="left:522.3px;top:242.4325px;color:#1a1a1a">On-Chip Memory (RAM or ROM) Intel ...</div>
<div class="t" style="left:352.7px;top:251.8775px;color:#1a1a1a">clk1</div>
<div class="t" style="left:522.3px;top:251.8775px;color:#1a1a1a">Clock Input</div>
<div class="t" style="left:633.5px;top:251.8775px;font-style:italic;font-size:6.60px;letter-spacing:0.36px;color:#c4c4c4">Double-click to export</div>
<div class="t" style="left:706.3px;top:251.8775px;color:#1a1a1a;font-weight:bold;letter-spacing:0.39px">clk_0</div>
<div class="t" style="left:352.7px;top:261.3225px;color:#1a1a1a">s1</div>
<div class="t" style="left:522.3px;top:261.3225px;color:#1a1a1a">Avalon Memory Mapped Slave</div>
<div class="t" style="left:633.5px;top:261.3225px;font-style:italic;font-size:6.60px;letter-spacing:0.36px;color:#c4c4c4">Double-click to export</div>
<div class="t" style="left:706.3px;top:261.3225px;color:#1a1a1a">[clk1]</div>
<svg style="left:746.5px;top:263.3225px" width="5" height="5"><path d="M0.8 4.5H3.8V2.2H0.8Z" fill="#bbb"/><path d="M1.5 2.2V1.2H3.5V2.2" stroke="#bbb" stroke-width="0.5" fill="none"/></svg>
<div class="t" style="left:756.8px;top:262.3225px;font-family:'Liberation Mono',monospace;font-weight:bold;font-size:6.60px;color:#222">0x0000_0000</div>
<div class="t" style="left:827.3px;top:262.3225px;font-family:'Liberation Mono',monospace;font-size:6.60px;color:#444">0x0000_0fff</div>
<div class="t" style="left:352.7px;top:270.7675px;color:#1a1a1a">reset1</div>
<div class="t" style="left:522.3px;top:270.7675px;color:#1a1a1a">Reset Input</div>
<div class="t" style="left:633.5px;top:270.7675px;font-style:italic;font-size:6.60px;letter-spacing:0.36px;color:#c4c4c4">Double-click to export</div>
<div class="t" style="left:706.3px;top:270.7675px;color:#1a1a1a">[clk1]</div>
<svg style="left:256.5px;top:281.21250000000003px" width="7" height="7"><rect x="0.5" y="0.5" width="6" height="6" fill="#fff" stroke="#555" stroke-width="0.7"/><path d="M1.6 3.6L3 5L5.6 2" stroke="#333" stroke-width="0.7" fill="none"/></svg>
<svg style="left:339.8px;top:282.1125px" width="6" height="6"><rect x="0.3" y="0.3" width="4.8" height="4.8" fill="none" stroke="#777" stroke-width="0.6"/><path d="M1.2 2.7H4.2" stroke="#333" stroke-width="0.6"/></svg>
<div class="t" style="left:348.9px;top:280.21250000000003px;font-weight:bold;color:#1a1a1a;letter-spacing:0.39px">spi_master</div>
<div class="t" style="left:522.3px;top:280.21250000000003px;color:#1a1a1a">SPI (4 Wire Serial) Intel FPGA IP</div>
<div class="t" style="left:352.7px;top:289.6575px;color:#1a1a1a">clk</div>
<div class="t" style="left:522.3px;top:289.6575px;color:#1a1a1a">Clock Input</div>
<div class="t" style="left:633.5px;top:289.6575px;font-style:italic;font-size:6.60px;letter-spacing:0.36px;color:#c4c4c4">Double-click to export</div>
<div class="t" style="left:706.3px;top:289.6575px;color:#1a1a1a;font-weight:bold;letter-spacing:0.39px">clk_0</div>
<div class="t" style="left:352.7px;top:299.1025px;color:#1a1a1a">reset</div>
<div class="t" style="left:522.3px;top:299.1025px;color:#1a1a1a">Reset Input</div>
<div class="t" style="left:633.5px;top:299.1025px;font-style:italic;font-size:6.60px;letter-spacing:0.36px;color:#c4c4c4">Double-click to export</div>
<div class="t" style="left:706.3px;top:299.1025px;color:#1a1a1a">[clk]</div>
<div class="t" style="left:352.7px;top:308.5475px;color:#1a1a1a">spi_control_port</div>
<div class="t" style="left:522.3px;top:308.5475px;color:#1a1a1a">Avalon Memory Mapped Slave</div>
<div class="t" style="left:633.5px;top:308.5475px;font-style:italic;font-size:6.60px;letter-spacing:0.36px;color:#c4c4c4">Double-click to export</div>
<div class="t" style="left:706.3px;top:308.5475px;color:#1a1a1a">[clk]</div>
<svg style="left:746.5px;top:310.5475px" width="5" height="5"><path d="M0.8 4.5H3.8V2.2H0.8Z" fill="#bbb"/><path d="M1.5 2.2V1.2H3.5V2.2" stroke="#bbb" stroke-width="0.5" fill="none"/></svg>
<div class="t" style="left:756.8px;top:309.5475px;font-family:'Liberation Mono',monospace;font-weight:bold;font-size:6.60px;color:#222">0x0000_1000</div>
<div class="t" style="left:827.3px;top:309.5475px;font-family:'Liberation Mono',monospace;font-size:6.60px;color:#444">0x0000_101f</div>
<div class="t" style="left:352.7px;top:317.9925px;color:#1a1a1a">irq</div>
<div class="t" style="left:522.3px;top:317.9925px;color:#1a1a1a">Interrupt Sender</div>
<div class="t" style="left:633.5px;top:317.9925px;font-style:italic;font-size:6.60px;letter-spacing:0.36px;color:#c4c4c4">Double-click to export</div>
<div class="t" style="left:706.3px;top:317.9925px;color:#1a1a1a">[clk]</div>
<div class="t" style="left:352.7px;top:327.4375px;color:#1a1a1a">external</div>
<div class="t" style="left:522.3px;top:327.4375px;color:#1a1a1a">Conduit</div>
<div class="t" style="left:627.2px;top:327.4375px;font-weight:bold;color:#111;letter-spacing:0.39px">spi_master_external</div>
<svg style="left:0;top:0" width="999" height="541"><path d="M325.00 134.69L325.00 330.84" stroke="#c4c4c4" stroke-width="0.6" fill="none"/><path d="M308.60 313.05V192.46Q308.60 190.26 310.80 190.26H333.80" stroke="#c4c4c4" stroke-width="0.6" fill="none"/><path d="M336.30 188.76Q333.30 189.06 333.30 190.26Q333.30 191.46 336.30 191.76" stroke="#c4c4c4" stroke-width="0.6" fill="none"/><path d="M316.70 265.82L316.70 313.05" stroke="#c4c4c4" stroke-width="0.6" fill="none"/><path d="M274.60 294.16V107.46Q274.60 105.26 276.80 105.26H333.80" stroke="#2a2a2a" stroke-width="0.9" fill="none"/><path d="M336.30 103.76Q333.30 104.06 333.30 105.26Q333.30 106.46 336.30 106.76" stroke="#2a2a2a" stroke-width="0.6" fill="none"/><path d="M283.00 303.60V116.90Q283.00 114.70 285.20 114.70H333.80" stroke="#2a2a2a" stroke-width="0.9" fill="none"/><path d="M336.30 113.20Q333.30 113.50 333.30 114.70Q333.30 115.90 336.30 116.20" stroke="#2a2a2a" stroke-width="0.6" fill="none"/><path d="M291.60 95.81L291.60 150.28" stroke="#2a2a2a" stroke-width="0.9" fill="none"/><path d="M291.60 150.28Q291.60 152.48 293.80 152.48H333.80" stroke="#2a2a2a" stroke-width="0.9" fill="none"/><path d="M293.80 152.48Q291.60 152.48 291.60 154.68V303.60" stroke="#2a2a2a" stroke-width="0.9" fill="none"/><path d="M336.30 150.98Q333.30 151.28 333.30 152.48Q333.30 153.68 336.30 153.98" stroke="#2a2a2a" stroke-width="0.6" fill="none"/><path d="M300.00 313.05V173.57Q300.00 171.37 302.20 171.37H333.80" stroke="#2a2a2a" stroke-width="0.9" fill="none"/><path d="M336.30 169.87Q333.30 170.17 333.30 171.37Q333.30 172.57 336.30 172.87" stroke="#2a2a2a" stroke-width="0.6" fill="none"/><path d="M316.70 265.82V239.69Q316.70 237.49 318.90 237.49H333.80" stroke="#2a2a2a" stroke-width="0.9" fill="none"/><path d="M336.30 235.99Q333.30 236.29 333.30 237.49Q333.30 238.69 336.30 238.99" stroke="#2a2a2a" stroke-width="0.6" fill="none"/><path d="M291.60 95.81L334.80 95.81" stroke="#2a2a2a" stroke-width="0.9" fill="none"/><path d="M333.50 94.31L336.30 95.81L333.50 97.31Z" fill="#2a2a2a"/><circle cx="291.60" cy="95.81" r="1.55" fill="#000"/><path d="M274.60 161.93L334.80 161.93" stroke="#2a2a2a" stroke-width="0.9" fill="none"/><path d="M333.50 160.43L336.30 161.93L333.50 163.43Z" fill="#2a2a2a"/><circle cx="274.60" cy="161.93" r="1.55" fill="#000"/><path d="M274.60 180.82L334.80 180.82" stroke="#2a2a2a" stroke-width="0.9" fill="none"/><path d="M333.50 179.32L336.30 180.82L333.50 182.32Z" fill="#2a2a2a"/><circle cx="274.60" cy="180.82" r="1.55" fill="#000"/><path d="M274.60 209.15L334.80 209.15" stroke="#2a2a2a" stroke-width="0.9" fill="none"/><path d="M333.50 207.65L336.30 209.15L333.50 210.65Z" fill="#2a2a2a"/><circle cx="274.60" cy="209.15" r="1.55" fill="#000"/><path d="M274.60 256.38L334.80 256.38" stroke="#2a2a2a" stroke-width="0.9" fill="none"/><path d="M333.50 254.88L336.30 256.38L333.50 257.88Z" fill="#2a2a2a"/><circle cx="274.60" cy="256.38" r="1.55" fill="#000"/><path d="M274.60 294.16L334.80 294.16" stroke="#2a2a2a" stroke-width="0.9" fill="none"/><path d="M333.50 292.66L336.30 294.16L333.50 295.66Z" fill="#2a2a2a"/><circle cx="274.60" cy="294.16" r="1.55" fill="#000"/><path d="M283.00 218.60L334.80 218.60" stroke="#2a2a2a" stroke-width="0.9" fill="none"/><path d="M333.50 217.10L336.30 218.60L333.50 220.10Z" fill="#2a2a2a"/><circle cx="283.00" cy="218.60" r="1.55" fill="#000"/><circle cx="291.60" cy="218.60" r="1.55" fill="#000"/><path d="M283.00 275.27L334.80 275.27" stroke="#2a2a2a" stroke-width="0.9" fill="none"/><path d="M333.50 273.77L336.30 275.27L333.50 276.77Z" fill="#2a2a2a"/><circle cx="283.00" cy="275.27" r="1.55" fill="#000"/><circle cx="291.60" cy="275.27" r="1.55" fill="#000"/><path d="M283.00 303.60L334.80 303.60" stroke="#2a2a2a" stroke-width="0.9" fill="none"/><path d="M333.50 302.10L336.30 303.60L333.50 305.10Z" fill="#2a2a2a"/><circle cx="283.00" cy="303.60" r="1.55" fill="#000"/><circle cx="291.60" cy="303.60" r="1.55" fill="#000"/><path d="M300.00 265.82L334.80 265.82" stroke="#2a2a2a" stroke-width="0.9" fill="none"/><path d="M333.50 264.32L336.30 265.82L333.50 267.32Z" fill="#2a2a2a"/><circle cx="300.00" cy="265.82" r="1.55" fill="#000"/><circle cx="316.70" cy="265.82" r="1.55" fill="#000"/><path d="M300.00 313.05L334.80 313.05" stroke="#2a2a2a" stroke-width="0.9" fill="none"/><path d="M333.50 311.55L336.30 313.05L333.50 314.55Z" fill="#2a2a2a"/><circle cx="300.00" cy="313.05" r="1.55" fill="#000"/><path d="M329 84.57H331.5Q334 84.57 334 86.37Q334 88.17 331.5 88.17H329Z" fill="none" stroke="#2a2a2a" stroke-width="0.6"/><path d="M334.00 86.37L337.00 86.37" stroke="#2a2a2a" stroke-width="0.6" fill="none"/><circle cx="325.00" cy="133.59" r="1.35" fill="none" stroke="#a4a4a4" stroke-width="0.65"/><path d="M326.35 133.59L329.80 133.59" stroke="#b0b0b0" stroke-width="0.65" fill="none"/><ellipse cx="332" cy="133.59" rx="2.2" ry="1.5" fill="none" stroke="#2a2a2a" stroke-width="0.7"/><path d="M334.20 133.59L337.00 133.59" stroke="#2a2a2a" stroke-width="0.7" fill="none"/><circle cx="325.00" cy="143.04" r="1.35" fill="none" stroke="#a4a4a4" stroke-width="0.65"/><path d="M326.35 143.04L329.80 143.04" stroke="#b0b0b0" stroke-width="0.65" fill="none"/><ellipse cx="332" cy="143.04" rx="2.2" ry="1.5" fill="none" stroke="#2a2a2a" stroke-width="0.7"/><path d="M334.20 143.04L337.00 143.04" stroke="#2a2a2a" stroke-width="0.7" fill="none"/><circle cx="325.00" cy="228.04" r="1.35" fill="none" stroke="#a4a4a4" stroke-width="0.65"/><path d="M326.35 228.04L329.80 228.04" stroke="#b0b0b0" stroke-width="0.65" fill="none"/><ellipse cx="332" cy="228.04" rx="2.2" ry="1.5" fill="none" stroke="#2a2a2a" stroke-width="0.7"/><path d="M334.20 228.04L337.00 228.04" stroke="#2a2a2a" stroke-width="0.7" fill="none"/><circle cx="325.00" cy="331.94" r="1.35" fill="none" stroke="#a4a4a4" stroke-width="0.65"/><path d="M326.35 331.94L329.80 331.94" stroke="#b0b0b0" stroke-width="0.65" fill="none"/><ellipse cx="332" cy="331.94" rx="2.2" ry="1.5" fill="none" stroke="#2a2a2a" stroke-width="0.7"/><path d="M334.20 331.94L337.00 331.94" stroke="#2a2a2a" stroke-width="0.7" fill="none"/></svg>
<div class="" style="left:251px;top:375.2px;width:742.5px;height:8.5px;background:#f0f0f0;border-bottom:1px solid #b0b0b0"></div>
<div class="" style="left:251px;top:375.2px;width:9px;height:8.3px;background:#f4f4f4"></div>
<svg style="left:253px;top:376.5px" width="6" height="6"><path d="M4 1L2 3L4 5" stroke="#333" stroke-width="0.9" fill="none"/></svg>
<div class="" style="left:260.2px;top:375.2px;width:654px;height:8.3px;background:#cdcdcd"></div>
<svg style="left:986px;top:376.5px" width="6" height="6"><path d="M2 1L4 3L2 5" stroke="#555" stroke-width="0.8" fill="none"/></svg>
<svg style="left:251px;top:386.5px" width="10" height="10"><path d="M0.7 6.5Q0.7 2.5 2.3 2.5Q3.8 2.5 3.8 6" stroke="#f07070" stroke-width="0.9" fill="none"/><path d="M5.6 5.3Q6.6 4.3 7.5 5.1Q8.4 5.8 9.4 4.8" stroke="#f06060" stroke-width="0.9" fill="none"/><path d="M4.7 0.6V9.3" stroke="#1f4ea8" stroke-width="0.8"/></svg>
<svg style="left:262px;top:386.5px" width="10" height="10"><path d="M0.8 7.2Q2.8 7 2.9 4.5Q3 2.3 4.1 2.2" stroke="#f06a6a" stroke-width="0.9" fill="none"/><path d="M5.5 2.2Q6.7 2.3 6.8 4.5Q6.9 7 8.9 7.2" stroke="#f06a6a" stroke-width="0.9" fill="none"/><path d="M4.8 0.6V9.3" stroke="#1f4ea8" stroke-width="0.8"/></svg>
<svg style="left:273px;top:391px" width="1" height="1"><rect width="1" height="1" fill="#bbb"/></svg>
<svg style="left:276px;top:387.5px" width="9" height="9"><path d="M0.3 1.2Q4.3 0.2 8.4 1.2L5.4 5.3L5 7.8H3.7L3.3 5.3Z" fill="#f7980e"/><path d="M2 1.6H6.7" stroke="#ffd090" stroke-width="0.6"/></svg>
<svg style="left:287px;top:387.5px" width="9" height="9"><path d="M0.3 1.2Q4.3 0.2 8.4 1.2L5.4 5.3L5 7.8H3.7L3.3 5.3Z" fill="#8c8c8c"/><path d="M2 1.6H6.7" stroke="#c8c8c8" stroke-width="0.6"/><path d="M5.3 5.5L7.6 7.8M6.2 7.8H7.6V6.4" stroke="#707070" stroke-width="0.7" fill="none"/></svg>
<div class="t" style="left:299px;top:387.0px;font-weight:bold;color:#111;letter-spacing:0.39px">Current filter:</div>
<div class="" style="left:233.9px;top:402.5px;width:762px;height:121px;border:1px solid #8c8c8c;border-radius:3px 3px 0 0;background:#f0f0f0;box-shadow:inset -1px -1px 0 #cfcfcf"></div>
<div class="" style="left:234.9px;top:403px;width:57px;height:13px;background:linear-gradient(#b9c1cb,#eef0f2);border-right:1px solid #8a8a8a;border-radius:3px 3px 0 0"></div>
<svg style="left:237.5px;top:405px" width="9" height="9"><path d="M0.5 0.5L3.5 3.5M3.5 0.5L0.5 3.5" stroke="#e03a2a" stroke-width="0.7"/><circle cx="2" cy="6.5" r="1.8" fill="#2f8fe0"/><path d="M5 1.5H8M5 4H8M5 6.5H8M5 8.5H8" stroke="#4a7ab8" stroke-width="0.8"/></svg>
<div class="t" style="left:249px;top:405.2px;color:#222">Messages</div>
<svg style="left:283.5px;top:406.8px" width="6" height="6"><g fill="none" stroke="#b8b8b8" stroke-width="0.7"><circle cx="1.5" cy="1.5" r="1"/><circle cx="4.5" cy="1.5" r="1"/><circle cx="1.5" cy="4.5" r="1"/><circle cx="4.5" cy="4.5" r="1"/></g></svg>
<div class="" style="left:291.9px;top:403.5px;width:703px;height:12px;background:#efefef;border-left:1px solid #9a9a9a;border-bottom:1px solid #a8a8a8;box-shadow:inset 0 1px 0 #fff;border-radius:0 3px 0 0"></div>
<svg style="left:968px;top:405px" width="28" height="9"><path d="M0 6H4.3" stroke="#111" stroke-width="1.1"/><rect x="8.9" y="3.6" width="5.2" height="4" fill="none" stroke="#111" stroke-width="0.95"/><path d="M8.9 4.6H14" stroke="#111" stroke-width="0.9"/><path d="M12.3 3.2L15.2 1.1M13.6 0.9H15.4V2.5" stroke="#111" stroke-width="0.65" fill="none"/><rect x="18.8" y="2.6" width="6.4" height="4.6" fill="none" stroke="#111" stroke-width="0.95"/><path d="M18.8 3.6H25.2" stroke="#111" stroke-width="1"/></svg>
<div class="" style="left:235px;top:416.8px;width:750.8px;height:107px;background:#fff;border-left:1px solid #c8c8c8;border-top:1px solid #c8c8c8"></div>
<div class="t" style="left:239.5px;top:419.8px;color:#1a1a1a">Type</div>
<div class="t" style="left:279px;top:419.8px;color:#1a1a1a">Path</div>
<div class="t" style="left:358px;top:419.8px;color:#1a1a1a">Message</div>
<div class="" style="left:274.2px;top:417.8px;width:0.8px;height:13.5px;background:#e4e4e4"></div>
<div class="" style="left:353.6px;top:417.8px;width:0.8px;height:13.5px;background:#e4e4e4"></div>
<div class="" style="left:236px;top:430.3px;width:749.8px;height:1px;background:#ececec"></div>
<div class="" style="left:236px;top:441.47px;width:749.8px;height:1.1px;background:#c4c4c4"></div>
<div class="" style="left:236px;top:453.14000000000004px;width:749.8px;height:1.1px;background:#c4c4c4"></div>
<div class="" style="left:236px;top:464.81px;width:749.8px;height:1.1px;background:#c4c4c4"></div>
<div class="" style="left:236px;top:476.48px;width:749.8px;height:1.1px;background:#c4c4c4"></div>
<div class="" style="left:236px;top:488.15000000000003px;width:749.8px;height:1.1px;background:#c4c4c4"></div>
<div class="" style="left:236px;top:499.82000000000005px;width:749.8px;height:1.1px;background:#c4c4c4"></div>
<div class="" style="left:236px;top:511.49px;width:749.8px;height:1.1px;background:#c4c4c4"></div>
<div class="" style="left:274.2px;top:430.8px;width:0.8px;height:11.17px;background:#b0b0b0"></div>
<div class="" style="left:353.6px;top:430.8px;width:0.8px;height:11.17px;background:#b0b0b0"></div>
<div class="" style="left:274.2px;top:442.47px;width:0.8px;height:11.17px;background:#b0b0b0"></div>
<div class="" style="left:353.6px;top:442.47px;width:0.8px;height:11.17px;background:#b0b0b0"></div>
<div class="" style="left:274.2px;top:454.14px;width:0.8px;height:11.17px;background:#b0b0b0"></div>
<div class="" style="left:353.6px;top:454.14px;width:0.8px;height:11.17px;background:#b0b0b0"></div>
<div class="" style="left:274.2px;top:465.81px;width:0.8px;height:11.17px;background:#b0b0b0"></div>
<div class="" style="left:353.6px;top:465.81px;width:0.8px;height:11.17px;background:#b0b0b0"></div>
<div class="" style="left:274.2px;top:477.48px;width:0.8px;height:11.17px;background:#b0b0b0"></div>
<div class="" style="left:353.6px;top:477.48px;width:0.8px;height:11.17px;background:#b0b0b0"></div>
<div class="" style="left:274.2px;top:489.15000000000003px;width:0.8px;height:11.17px;background:#b0b0b0"></div>
<div class="" style="left:353.6px;top:489.15000000000003px;width:0.8px;height:11.17px;background:#b0b0b0"></div>
<div class="" style="left:274.2px;top:500.82px;width:0.8px;height:11.17px;background:#b0b0b0"></div>
<div class="" style="left:353.6px;top:500.82px;width:0.8px;height:11.17px;background:#b0b0b0"></div>
<svg style="left:236.2px;top:433.135px" width="5" height="5"><rect x="0.3" y="0.3" width="4.4" height="4.4" rx="0.6" fill="#e8ecf1" stroke="#a0a8b8" stroke-width="0.6"/><path d="M1.2 2.5H3.8" stroke="#3c5080" stroke-width="0.6"/></svg>
<svg style="left:241px;top:431.635px" width="9" height="8"><path d="M4.5 0.6L8.6 7.5H0.4Z" fill="#fae07a" stroke="#e0a838" stroke-width="0.6"/><path d="M4.5 2.8V5.2" stroke="#8a6410" stroke-width="0.8"/><circle cx="4.5" cy="6.3" r="0.4" fill="#8a6410"/></svg>
<div class="t" style="left:275.8px;top:431.135px;color:#1e1ee0">4 Warnings</div>
<svg style="left:245.5px;top:443.305px" width="9" height="8"><path d="M4.5 0.6L8.6 7.5H0.4Z" fill="#fae07a" stroke="#e0a838" stroke-width="0.6"/><path d="M4.5 2.8V5.2" stroke="#8a6410" stroke-width="0.8"/><circle cx="4.5" cy="6.3" r="0.4" fill="#8a6410"/></svg>
<div class="t" style="left:275.8px;top:442.805px;font-weight:bold;color:#1e1ee0;letter-spacing:0.39px">spi_to_avalon.hps_0</div>
<div class="t" style="left:355.5px;top:442.805px;color:#1e1ee0"><b style="letter-spacing:0.28px">"Configuration/HPS-to-FPGA user 0 clock frequency" (desired_cfg_clk_mhz)</b> requested 100.0 MHz, but only achieved 97.368421 MHz</div>
<svg style="left:245.5px;top:454.975px" width="9" height="8"><path d="M4.5 0.6L8.6 7.5H0.4Z" fill="#fae07a" stroke="#e0a838" stroke-width="0.6"/><path d="M4.5 2.8V5.2" stroke="#8a6410" stroke-width="0.8"/><circle cx="4.5" cy="6.3" r="0.4" fill="#8a6410"/></svg>
<div class="t" style="left:275.8px;top:454.475px;font-weight:bold;color:#1e1ee0;letter-spacing:0.39px">spi_to_avalon.hps_0</div>
<div class="t" style="left:355.5px;top:454.475px;color:#1e1ee0">1 or more output clock frequencies cannot be achieved precisely, consider revising desired output clock frequencies.</div>
<svg style="left:245.5px;top:466.645px" width="9" height="8"><path d="M4.5 0.6L8.6 7.5H0.4Z" fill="#fae07a" stroke="#e0a838" stroke-width="0.6"/><path d="M4.5 2.8V5.2" stroke="#8a6410" stroke-width="0.8"/><circle cx="4.5" cy="6.3" r="0.4" fill="#8a6410"/></svg>
<div class="t" style="left:275.8px;top:466.145px;font-weight:bold;color:#1e1ee0;letter-spacing:0.39px">spi_to_avalon.hps_0</div>
<div class="t" style="left:355.5px;top:466.145px;color:#1e1ee0">ODT is disabled. Enabling ODT (Mode Register 1) may improve signal integrity</div>
<svg style="left:245.5px;top:478.315px" width="9" height="8"><path d="M4.5 0.6L8.6 7.5H0.4Z" fill="#fae07a" stroke="#e0a838" stroke-width="0.6"/><path d="M4.5 2.8V5.2" stroke="#8a6410" stroke-width="0.8"/><circle cx="4.5" cy="6.3" r="0.4" fill="#8a6410"/></svg>
<div class="t" style="left:275.8px;top:477.815px;font-weight:bold;color:#1e1ee0;letter-spacing:0.39px">spi_to_avalon.spi_master</div>
<div class="t" style="left:355.5px;top:477.815px;color:#1e1ee0">Interrupt sender <b style="letter-spacing:0.28px">spi_master.irq</b> is not connected to an interrupt receiver</div>
<svg style="left:236.2px;top:491.485px" width="5" height="5"><rect x="0.3" y="0.3" width="4.4" height="4.4" rx="0.6" fill="#e8ecf1" stroke="#a0a8b8" stroke-width="0.6"/><path d="M1.2 2.5H3.8" stroke="#3c5080" stroke-width="0.6"/></svg>
<svg style="left:241.5px;top:489.985px" width="8" height="8"><circle cx="4" cy="4" r="3.4" fill="#6d9ed8" stroke="#4a78b8" stroke-width="0.5"/><path d="M4 3.3V6" stroke="#fff" stroke-width="1"/><circle cx="4" cy="2" r="0.55" fill="#fff"/></svg>
<div class="t" style="left:275.8px;top:489.485px;color:#1f921f">2 Info Messages</div>
<svg style="left:246px;top:501.65500000000003px" width="8" height="8"><circle cx="4" cy="4" r="3.4" fill="#6d9ed8" stroke="#4a78b8" stroke-width="0.5"/><path d="M4 3.3V6" stroke="#fff" stroke-width="1"/><circle cx="4" cy="2" r="0.55" fill="#fff"/></svg>
<div class="t" style="left:275.8px;top:501.15500000000003px;font-weight:bold;color:#1f921f;letter-spacing:0.39px">spi_to_avalon.hps_0</div>
<div class="t" style="left:355.5px;top:501.15500000000003px;color:#1f921f">HPS Main PLL counter settings: n = 0 m = 73</div>
<div class="" style="left:985.8px;top:416.8px;width:8px;height:96px;background:#f0f0f0"></div>
<svg style="left:986px;top:418.5px" width="8" height="8"><rect x="0.5" y="0.5" width="7" height="7" fill="#c9d4e4" stroke="#8090b0" stroke-width="0.5"/><circle cx="3.5" cy="3.5" r="2" fill="#f0c040" stroke="#806020" stroke-width="0.5"/><path d="M5 5L7 7" stroke="#604020" stroke-width="0.9"/></svg>
<svg style="left:986.5px;top:432px" width="6" height="6"><path d="M1 4L3 2L5 4" stroke="#555" stroke-width="0.8" fill="none"/></svg>
<div class="" style="left:986.5px;top:440px;width:6.5px;height:57px;background:#cdcdcd"></div>
<svg style="left:986.5px;top:505px" width="6" height="6"><path d="M1 2L3 4L5 2" stroke="#555" stroke-width="0.8" fill="none"/></svg>
<div class="" style="left:235px;top:512.3px;width:751px;height:10.5px;background:#f0f0f0;border-top:1px solid #d8d8d8"></div>
<svg style="left:237px;top:515px" width="6" height="6"><path d="M4 1L2 3L4 5" stroke="#333" stroke-width="0.9" fill="none"/></svg>
<div class="" style="left:244px;top:513px;width:679px;height:9.5px;background:#cdcdcd"></div>
<svg style="left:979px;top:515px" width="6" height="6"><path d="M2 1L4 3L2 5" stroke="#555" stroke-width="0.8" fill="none"/></svg>
<div class="" style="left:3px;top:526.8px;width:914.5px;height:11.4px;background:#f5f0b8;border:1px solid #e6e0a8"></div>
<div class="t" style="left:6px;top:528.1px;color:#1a1a1a">0 Errors, 4 Warnings</div>
<div class="" style="left:920.3px;top:527.3px;width:49.5px;height:10.9px;background:#e4e4e4;border:1px solid #c4c4c4"></div>
<div class="t" style="left:924px;top:528.1px;color:#1a1a1a">Generate HDL...</div>
<div class="" style="left:973.3px;top:527.3px;width:22.5px;height:10.9px;background:#e4e4e4;border:1px solid #c4c4c4"></div>
<div class="t" style="left:976.5px;top:528.1px;color:#1a1a1a">Finish</div>
</body></html>
